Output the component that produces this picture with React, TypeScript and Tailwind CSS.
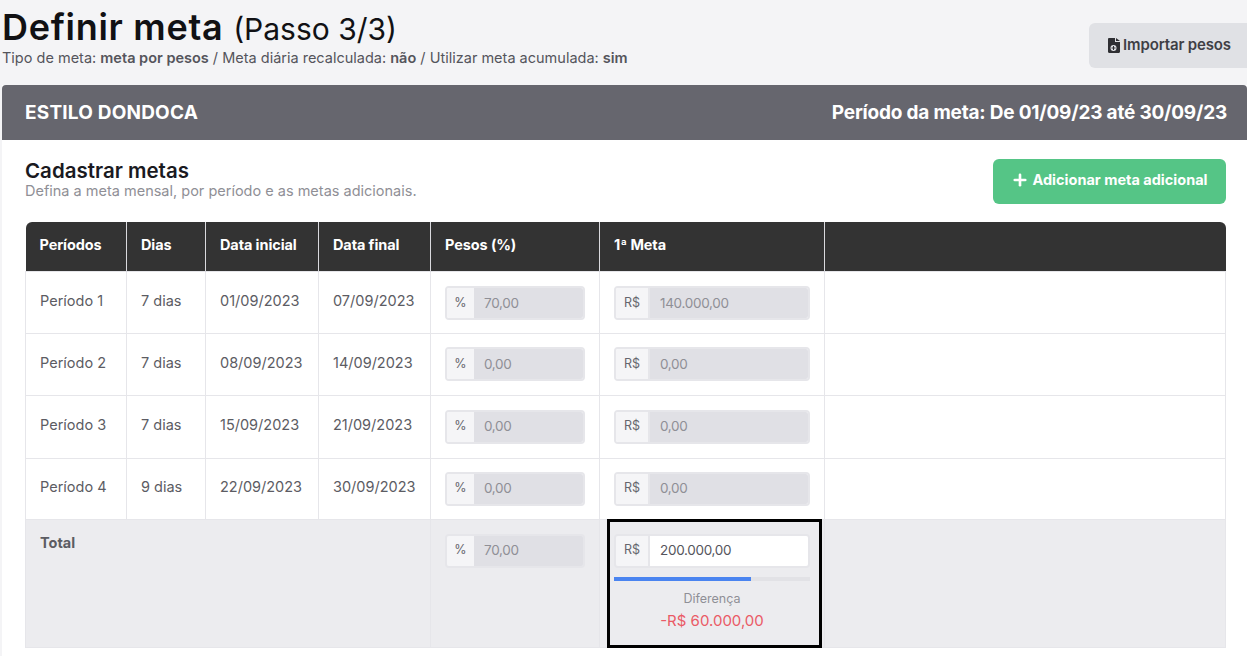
import React from 'react';
import { Plus } from 'lucide-react';

const periods = [
  { name: 'Período 1', days: '7 dias', start: '01/09/2023', end: '07/09/2023', weight: '70,00', goal: '140.000,00', h: 'h-[62px]', inputPad: 'pt-0.5' },
  { name: 'Período 2', days: '7 dias', start: '08/09/2023', end: '14/09/2023', weight: '0,00', goal: '0,00', h: 'h-[62px]', inputPad: '' },
  { name: 'Período 3', days: '7 dias', start: '15/09/2023', end: '21/09/2023', weight: '0,00', goal: '0,00', h: 'h-[63px]', inputPad: '' },
  { name: 'Período 4', days: '9 dias', start: '22/09/2023', end: '30/09/2023', weight: '0,00', goal: '0,00', h: 'h-[61px]', inputPad: '' },
];

const MoneyInput = ({ prefix, value, wide, active }: { prefix: string; value: string; wide?: boolean; active?: boolean }) => (
  <div className={`flex h-[34px] rounded border-2 border-[#e6e6ea] overflow-hidden ${wide ? 'w-[196px]' : 'w-[140px]'}`}>
    <span className={`flex items-center justify-center bg-[#f5f5f7] text-[12.500px] text-[#66666d] ${wide ? 'w-[34px] border-r-2 border-[#e6e6ea]' : 'w-[27px]'}`}>
      {prefix}
    </span>
    <span className={`flex flex-1 items-center pl-2.5 text-[13.500px] tracking-[-0.3px] ${active ? 'bg-white text-[#55555c]' : 'bg-[#e0e0e5] text-[#8f8f96]'}`}>
      {value}
    </span>
  </div>
);

const ImportIcon = () => (
  <svg width="12" height="15" viewBox="0 0 12 15" className="shrink-0">
    <path d="M0 1.200C0 .5.5 0 1.200 0H7v4h5v9.800c0 .7-.5 1.200-1.200 1.200H1.200C.5 15 0 14.500 0 13.800z" fill="#2f2f33" />
    <path d="M8 0l4 3H8z" fill="#2f2f33" />
    <circle cx="5.500" cy="10" r="3" fill="#e0e1e5" />
    <path d="M5.500 8v4M3.500 10h4" stroke="#2f2f33" strokeWidth="1" />
  </svg>
);

const thClass = 'border-x border-[#d9d9de] first:border-l-0 last:border-r-0 px-3.5 pb-[3px] text-left text-[14.500px] font-bold tracking-[-0.1px] text-white';
const tdClass = 'border border-[#e6e6ea] px-3.5 text-[14.500px] text-[#5c5c63]';

export default function App() {
  return (
    <div className="h-[656px] overflow-hidden bg-[#f4f4f6] font-['Inter','Liberation_Sans',sans-serif]">
      <div className="flex h-[85px] items-start justify-between pl-0.5 pt-[6px]">
        <div>
          <h1 className="text-[36px] leading-[42px] font-semibold tracking-[0.7px] text-[#111114]">
            Definir meta <span className="text-[30px] font-normal tracking-normal">(Passo 3/3)</span>
          </h1>
          <p className="text-[14.500px] leading-[16px] text-[#55555c]">
            Tipo de meta: <b className="font-semibold">meta por pesos</b> / Meta diária recalculada: <b className="font-semibold">não</b> / Utilizar meta acumulada: <b className="font-semibold">sim</b>
          </p>
        </div>
        <button className="mt-[17px] flex h-[45px] w-[158px] items-center justify-center gap-[3px] rounded-l-md bg-[#e0e1e5] pl-[3px] text-[15px] font-semibold tracking-[-0.15px] text-[#3f3f45]">
          <ImportIcon />
          Importar pesos
        </button>
      </div>

      <div className="ml-0.5 h-[571px] bg-white">
        <div className="flex h-[55px] items-center justify-between rounded-t bg-[#66666e] pl-[23px] pr-[20px] pt-0.5 text-[19px] font-bold text-white">
          <span className="tracking-[0.2px]">ESTILO DONDOCA</span>
          <span className="tracking-[-0.2px]">Período da meta: De 01/09/23 até 30/09/23</span>
        </div>

        <div className="pl-[23px] pr-[21px]">
          <div className="flex h-[82px] items-start justify-between pt-5">
            <div>
              <h2 className="text-[20.500px] leading-[22px] font-semibold text-[#1a1a1f]">Cadastrar metas</h2>
              <p className="mt-px text-[14.500px] leading-[16px] text-[#8f8f96]">Defina a meta mensal, por período e as metas adicionais.</p>
            </div>
            <button className="-mt-px flex h-[45px] w-[233px] items-center justify-center gap-[3px] rounded-md bg-[#55c586] pb-1 text-[14.500px] font-bold text-white">
              <Plus size={18} strokeWidth={3.500} />
              Adicionar meta adicional
            </button>
          </div>

          <table className="w-[1201px] table-fixed border-collapse">
            <colgroup>
              <col className="w-[101px]" />
              <col className="w-[79px]" />
              <col className="w-[113px]" />
              <col className="w-[112px]" />
              <col className="w-[169px]" />
              <col className="w-[225px]" />
              <col />
            </colgroup>
            <thead>
              <tr className="h-[49px] bg-[#333333]">
                <th className={`${thClass} rounded-tl-md`}>Períodos</th>
                <th className={thClass}>Dias</th>
                <th className={thClass}>Data inicial</th>
                <th className={thClass}>Data final</th>
                <th className={thClass}>Pesos (%)</th>
                <th className={thClass}>1ª Meta</th>
                <th className={`${thClass} rounded-tr-md`}></th>
              </tr>
            </thead>
            <tbody>
              {periods.map((p) => (
                <tr key={p.name} className={p.h}>
                  <td className={`${tdClass} pb-[3px]`}>{p.name}</td>
                  <td className={`${tdClass} pb-[3px]`}>{p.days}</td>
                  <td className={`${tdClass} pb-[3px]`}>{p.start}</td>
                  <td className={`${tdClass} pb-[3px]`}>{p.end}</td>
                  <td className={`${tdClass} ${p.inputPad}`}><MoneyInput prefix="%" value={p.weight} /></td>
                  <td className={`${tdClass} ${p.inputPad}`}><MoneyInput prefix="R$" value={p.goal} wide /></td>
                  <td className={tdClass}></td>
                </tr>
              ))}
              <tr className="h-[128px] bg-[#ececef]">
                <td colSpan={4} className={`${tdClass} pt-3 align-top font-bold text-[#4a4a50]`}>Total</td>
                <td className={`${tdClass} pt-3.5 align-top`}><MoneyInput prefix="%" value="70,00" /></td>
                <td className={`${tdClass} relative pt-3.5 align-top`}>
                  <MoneyInput prefix="R$" value="200.000,00" wide active />
                  <div className="mt-[9px] h-1 w-[196px] bg-[#e2e2e6]">
                    <div className="h-1 bg-[#4a84f0]" style={{ width: '70%' }} />
                  </div>
                  <p className="mt-[10px] w-[196px] text-center text-[12.500px] leading-[16px] text-[#8f8f96]">Diferença</p>
                  <p className="mt-1 w-[196px] text-center text-[15px] leading-[20px] text-[#ea5a66]">-R$ 60.000,00</p>
                  <div className="absolute left-[7px] right-[2px] top-[-1px] bottom-[-1px] border-[3px] border-black" />
                </td>
                <td className={tdClass}></td>
              </tr>
            </tbody>
          </table>
        </div>
      </div>
    </div>
  );
}
